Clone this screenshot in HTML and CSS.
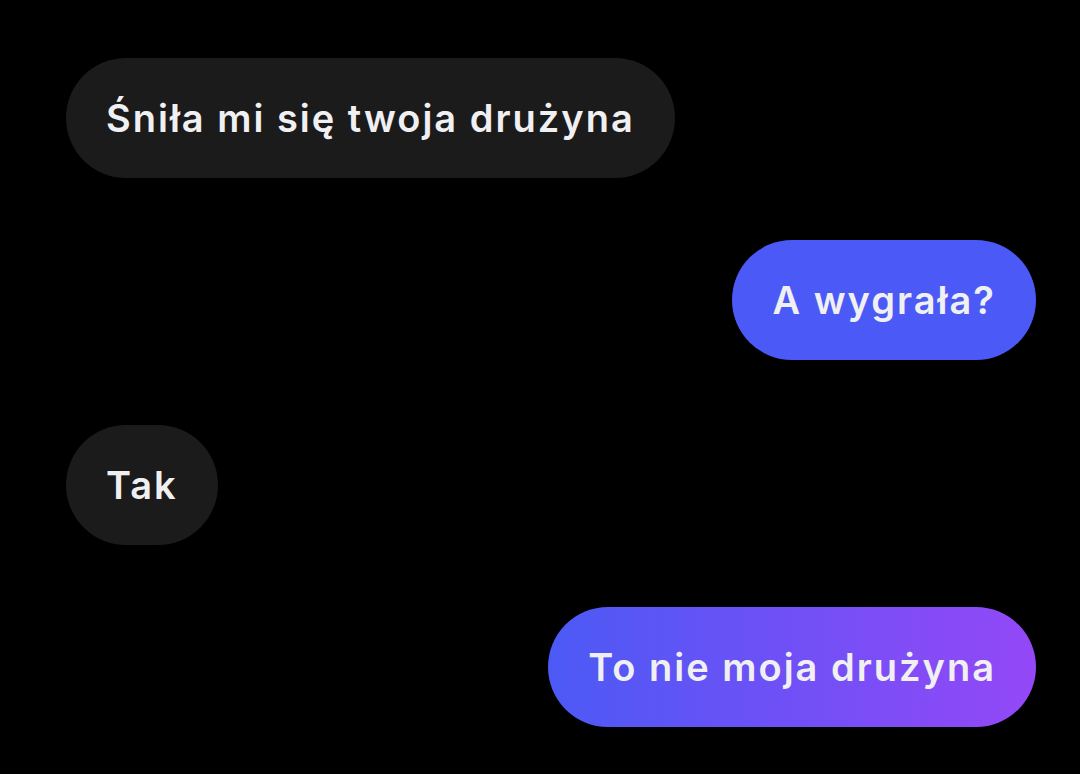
FILE: index.html
```html
<!DOCTYPE html>
<html lang="pl">
<head>
<meta charset="utf-8">
<link rel="stylesheet" href="styles.css">
</head>
<body>
<main class="chat">
  <div class="row left r1"><div class="bubble dark">Śniła mi się twoja drużyna</div></div>
  <div class="row right r2"><div class="bubble blue">A wygrała?</div></div>
  <div class="row left r3"><div class="bubble dark">Tak</div></div>
  <div class="row right r4"><div class="bubble grad">To nie moja drużyna</div></div>
</main>
</body>
</html>
```
FILE: styles.css
```css
html, body {
  margin: 0;
  padding: 0;
  background: #000;
  width: 1080px;
  height: 774px;
  overflow: hidden;
}
.chat {
  display: flex;
  flex-direction: column;
  padding: 58px 44px 0 66px;
  font-family: Inter, "Liberation Sans", sans-serif;
}
.row { display: flex; }
.row.left { justify-content: flex-start; }
.row.right { justify-content: flex-end; }
.r2 { margin-top: 62px; }
.r3 { margin-top: 65px; }
.r4 { margin-top: 62px; }
.bubble {
  height: 120px;
  box-sizing: border-box;
  display: flex;
  align-items: center;
  padding: 0 40px 0 40px;
  border-radius: 60px;
  color: #f0f0f2;
  font-size: 38px;
  font-weight: 600;
  letter-spacing: 2px;
  white-space: nowrap;
}
.dark { background: #1b1b1b; }
.blue { background: #4b59f6; }
.grad { background: linear-gradient(90deg, #4c5af5 0%, #7050f6 50%, #9448f7 100%); }
```
